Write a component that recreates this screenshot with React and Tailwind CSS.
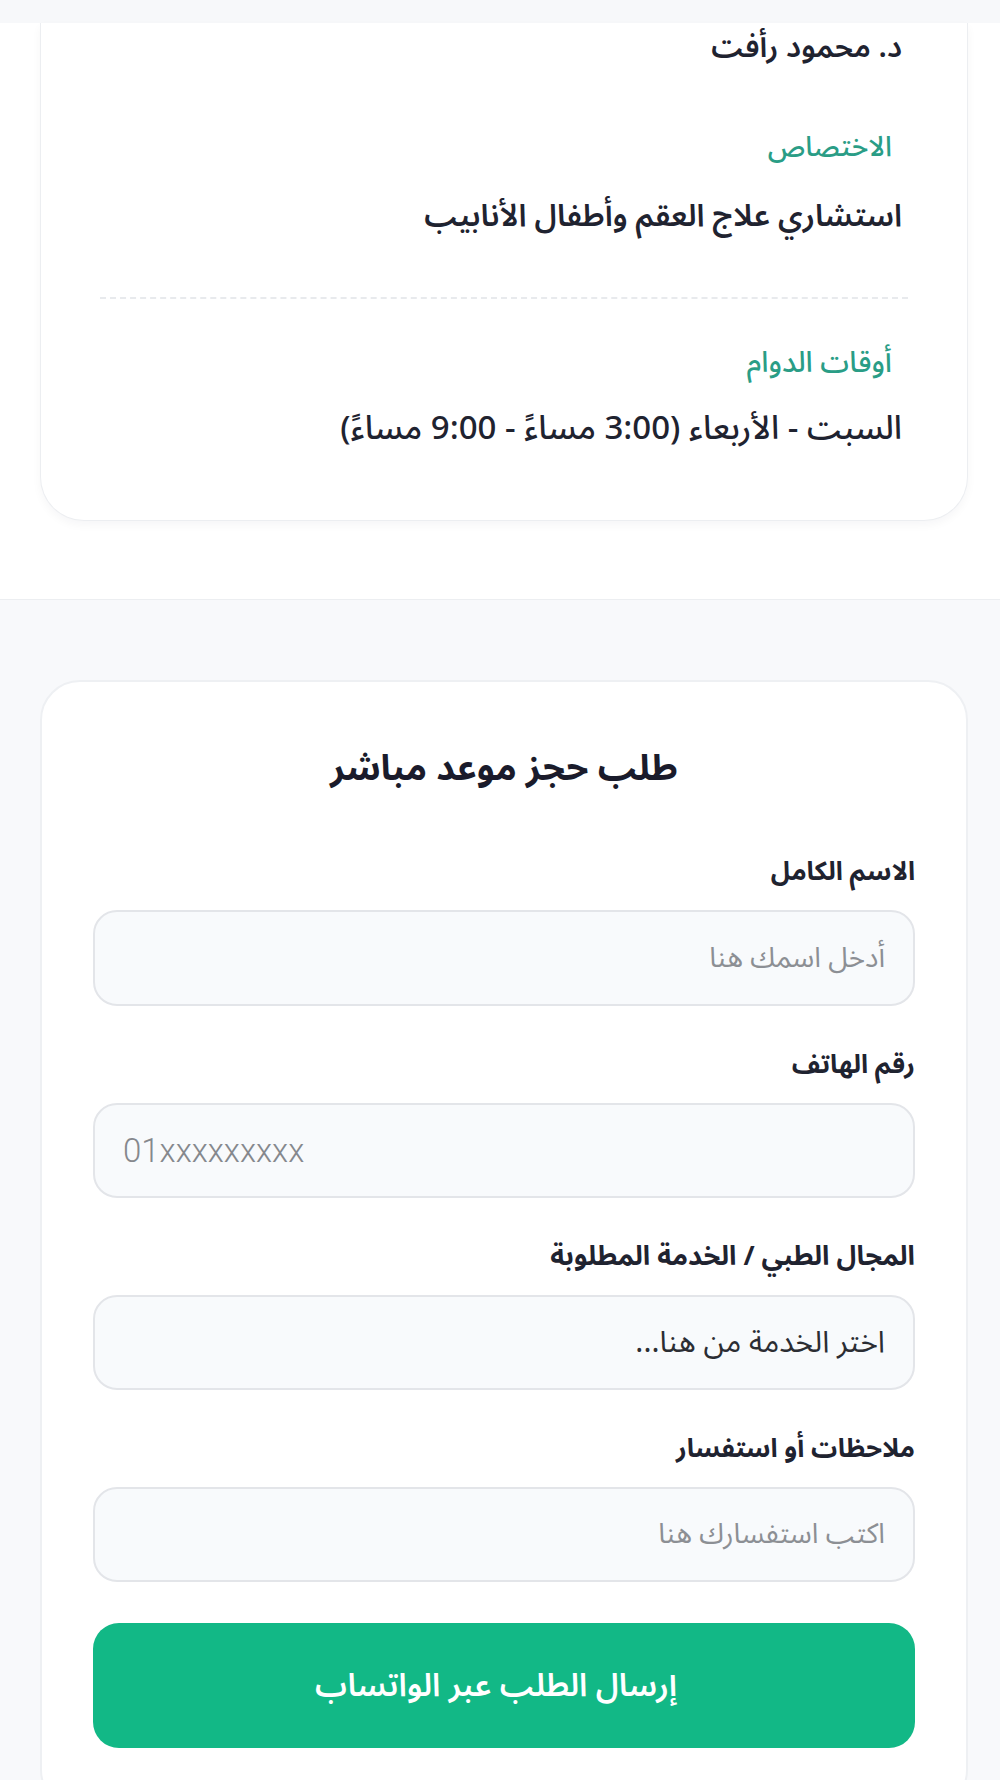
import React from 'react'

const arabic = { fontFamily: "'Noto Sans Arabic', 'Noto Naskh Arabic', 'DejaVu Sans', Roboto, sans-serif" }

function Field({ label, children }) {
    return (
        <div className="mb-[44px]">
            <label className="block text-[26px] leading-[30px] font-bold text-[#1f2330] mb-[23px]">{label}</label>
            {children}
        </div>
    )
}

export default function App() {
    return (
        <div dir="rtl" className="min-h-screen bg-white" style={arabic}>
            {/* top strip (header edge) */}
            <div className="h-[23px] bg-[#f7f8fa]"></div>

            {/* Doctor info card */}
            <section className="bg-white pl-[40px] pr-[32px] pb-[78px]">
                <div className="bg-white border-x border-b border-[#eceef1] rounded-b-[44px] shadow-[0_4px_10px_rgba(15,23,42,0.04)] px-[59px] pt-[5px] pb-[71px]">
                    <h2 className="text-[30px] leading-[40px] font-semibold text-[#1f2330] pr-[6px]">د. محمود رأفت</h2>

                    <p className="mt-[62px] text-[28px] leading-[36px] font-medium text-[#2a9d86] pr-[16px]">الاختصاص</p>
                    <p className="mt-[30px] text-[31px] leading-[40px] font-semibold text-[#1f2330] pr-[6px]">استشاري علاج العقم وأطفال الأنابيب</p>

                    <div className="mt-[61px] border-t-2 border-dashed border-[#e8eaed]"></div>

                    <p className="mt-[46px] text-[29px] leading-[36px] font-medium text-[#2a9d86] pr-[16px]">أوقات الدوام</p>
                    <p className="mt-[28px] text-[33px] leading-[40px] font-medium text-[#1f2330] pr-[6px]">السبت - الأربعاء (3:00 مساءً - 9:00 مساءً)</p>
                </div>
            </section>

            {/* Booking form */}
            <section className="bg-[#f8f9fb] border-t border-[#eceef1] pl-[40px] pr-[32px] pt-[80px] pb-[40px]">
                <div className="bg-white border-2 border-[#eef0f3] rounded-[40px] px-[51px] pt-[67px] pb-[60px]">
                    <h3 className="text-center text-[36px] leading-[40px] font-bold text-[#1a1b2b] mb-[68px]">طلب حجز موعد مباشر</h3>

                    <Field label="الاسم الكامل">
                        <input
                            type="text"
                            placeholder="أدخل اسمك هنا"
                            className="w-full h-[96px] rounded-[24px] bg-[#f8fafc] border-2 border-[#e3e5e9] px-[28px] text-[28px] text-[#1f2330] placeholder:text-[#8c8f94] outline-none"
                            style={arabic}
                        />
                    </Field>

                    <Field label="رقم الهاتف">
                        <input
                            type="tel"
                            dir="ltr"
                            placeholder="01xxxxxxxxx"
                            className="w-full h-[95px] rounded-[24px] bg-[#f8fafc] border-2 border-[#e3e5e9] px-[28px] text-[33px] font-light text-[#1f2330] placeholder:text-[#85888d] outline-none"
                            style={{ fontFamily: "Roboto, 'Noto Sans', sans-serif" }}
                        />
                    </Field>

                    <div className="mb-[44px]">
                        <label className="block text-[27px] leading-[30px] font-bold text-[#1f2330] mb-[23px]">المجال الطبي / الخدمة المطلوبة</label>
                        <div className="w-full h-[95px] rounded-[24px] bg-[#f8fafc] border-2 border-[#e3e5e9] px-[28px] flex items-center text-[30px] text-[#2b2d33]">
                            اختر الخدمة من هنا...
                        </div>
                    </div>

                    <div className="mb-[41px]">
                        <label className="block text-[26px] leading-[30px] font-bold text-[#1f2330] mb-[23px]">ملاحظات أو استفسار</label>
                        <input
                            type="text"
                            placeholder="اكتب استفسارك هنا"
                            className="w-full h-[95px] rounded-[24px] bg-[#f8fafc] border-2 border-[#e3e5e9] px-[28px] text-[28px] text-[#1f2330] placeholder:text-[#8c8f94] outline-none"
                            style={arabic}
                        />
                    </div>

                    <button
                        type="button"
                        className="w-full h-[125px] rounded-[26px] bg-[#12b886] text-white text-[32px] font-semibold pr-[16px]"
                        style={arabic}
                    >
                        إرسال الطلب عبر الواتساب
                    </button>
                </div>
            </section>
        </div>
    )
}
